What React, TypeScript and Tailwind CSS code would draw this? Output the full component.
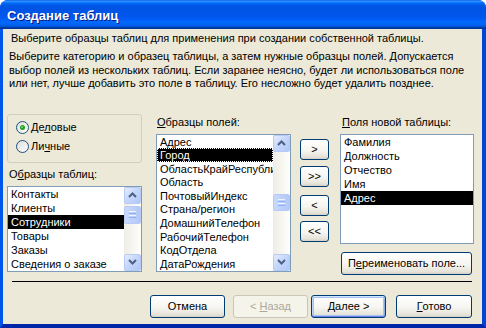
import React from "react";

function Arrow({ down }: { down?: boolean }) {
  return (
    <div className="h-[17px] w-full shrink-0 rounded-[2px] border border-[#B7CAF5] bg-[linear-gradient(135deg,#E6EEFD,#C6D7FC_45%,#B1C8F7)] flex items-center justify-center">
      <svg width="9" height="6" viewBox="0 0 9 6">
        <path d={down ? "M1 1 L4.5 4.5 L8 1" : "M1 5 L4.5 1.5 L8 5"} stroke="#4D6185" strokeWidth="2" fill="none" />
      </svg>
    </div>
  );
}

function Thumb({ cls }: { cls: string }) {
  return (
    <div className={"w-full rounded-[2px] border border-[#B7CAF5] bg-[linear-gradient(90deg,#C9D9FC,#BDD0FA_50%,#B3C8F7)] flex flex-col items-center justify-center gap-[1px] " + cls}>
      <div className="h-[1px] w-[7px] bg-[#EEF4FE]" />
      <div className="h-[1px] w-[7px] bg-[#8CB0F8]" />
      <div className="h-[1px] w-[7px] bg-[#EEF4FE]" />
      <div className="h-[1px] w-[7px] bg-[#8CB0F8]" />
    </div>
  );
}

function ScrollBar({ thumb }: { thumb: string }) {
  return (
    <div className="w-[17px] h-full flex flex-col bg-[linear-gradient(90deg,#EEEDE5,#FEFEFB)] shrink-0">
      <Arrow />
      <div className="flex-1 flex flex-col">
        <Thumb cls={thumb} />
      </div>
      <Arrow down />
    </div>
  );
}

function Item({ text, sel, focus }: { text: string; sel?: boolean; focus?: boolean }) {
  return (
    <div
      className={
        "h-[14px] leading-[14px] px-[3px] whitespace-nowrap overflow-hidden " +
        (sel ? "bg-black text-white " : "text-black ") +
        (focus ? "outline-1 outline-dotted outline-white -outline-offset-1" : "")
      }
    >
      {text}
    </div>
  );
}

function Btn({ children, cls, disabled, def }: { children: React.ReactNode; cls: string; disabled?: boolean; def?: boolean }) {
  return (
    <div
      className={
        "rounded-[3px] border flex items-center justify-center text-[11px] whitespace-pre " +
        (disabled
          ? "border-[#C9C7BA] bg-[#F5F4EA] text-[#ACA899] "
          : "border-[#003C74] bg-[linear-gradient(180deg,#FFFFFF_0%,#F6F5F0_55%,#E6E3D9_88%,#D6D0C5_100%)] text-black ") +
        (def ? "shadow-[inset_0_1px_0_#CEE7FF,inset_0_-1px_0_#6982EE,inset_1px_0_0_#BCD4F6,inset_-1px_0_0_#89ADE4,inset_0_0_0_2px_#A6C3F3] " : "") +
        cls
      }
    >
      {children}
    </div>
  );
}

function Radio({ checked }: { checked?: boolean }) {
  return (
    <svg width="13" height="13" viewBox="0 0 13 13" className="shrink-0">
      <defs>
        <linearGradient id={checked ? "rg1" : "rg2"} x1="0" y1="0" x2="1" y2="1">
          <stop offset="0" stopColor="#DCDCD7" />
          <stop offset="1" stopColor="#FFFFFF" />
        </linearGradient>
      </defs>
      <circle cx="6.5" cy="6.5" r="6" fill={`url(#${checked ? "rg1" : "rg2"})`} stroke="#1C5180" strokeWidth="1" />
      {checked && <circle cx="6.5" cy="6.5" r="2.5" fill="#21A121" />}
      {checked && <circle cx="6" cy="6" r="1" fill="#6CDB6C" />}
    </svg>
  );
}

export default function App() {
  return (
    <div className="w-[486px] h-[328px] bg-white font-['Liberation_Sans',Arial,sans-serif] text-[11px] text-black select-none">
      <div className="w-[486px] h-[328px] flex flex-col rounded-t-[8px] overflow-hidden bg-[#0A4BDD]">
        <div className="h-[29px] shrink-0 flex items-center pl-[7px] pt-[2px] bg-[linear-gradient(180deg,#0058EE_0%,#3593FF_4%,#288EFF_6%,#127DFF_8%,#036FFC_10%,#0262EE_14%,#0057E5_20%,#0054E3_24%,#0055EB_56%,#005BF5_66%,#026AFE_76%,#0062EF_86%,#0052D6_92%,#0040AB_94%,#003092_100%)]">
          <span className="text-white font-bold text-[13px] [text-shadow:1px_1px_#0A1883]">Создание таблиц</span>
        </div>
        <div className="flex-1 flex border-l-[3px] border-r-[4px] border-b-[4px] border-l-[#0055EA] border-r-[#0046D5] border-b-[#0027A8]">
          <div className="flex-1 bg-[#ECE9D8] flex flex-col">
            <p className="ml-[8px] mt-[3px] leading-[13px]">Выберите образцы таблиц для применения при создании собственной таблицы.</p>
            <p className="ml-[6px] mt-[5px] leading-[13.5px] w-[460px]">
              Выберите категорию и образец таблицы, а затем нужные образцы полей. Допускается выбор полей из нескольких таблиц. Если заранее неясно, будет ли использоваться поле или нет, лучше добавить это поле в таблицу. Его несложно будет удалить позднее.
            </p>
            <div className="flex items-start mt-[23px] ml-[4px]">
              {/* column 1 */}
              <div className="w-[135px] flex flex-col">
                <div className="h-[49px] rounded-[3px] border border-[#D0D0BF] flex flex-col pl-[8px] pt-[6px] gap-[5px]">
                  <div className="h-[14px] flex items-center gap-[2px]">
                    <Radio checked />
                    <span>Де<u>л</u>овые</span>
                  </div>
                  <div className="h-[14px] flex items-center gap-[2px]">
                    <Radio />
                    <span>Ли<u>ч</u>ные</span>
                  </div>
                </div>
                <div className="mt-[5px] ml-[2px] leading-[13px]">О<u>б</u>разцы таблиц:</div>
                <div className="mt-[5px] h-[86px] border border-[#7F9DB9] bg-white flex">
                  <div className="flex-1 flex flex-col overflow-hidden">
                    <Item text="Контакты" />
                    <Item text="Клиенты" />
                    <Item text="Сотрудники" sel />
                    <Item text="Товары" />
                    <Item text="Заказы" />
                    <Item text="Сведения о заказе" />
                  </div>
                  <ScrollBar thumb="mt-[2px] h-[18px]" />
                </div>
              </div>
              {/* column 2 */}
              <div className="ml-[14px] w-[135px] flex flex-col">
                <div className="mt-[2px] ml-[1px] leading-[13px]"><u>О</u>бразцы полей:</div>
                <div className="mt-[5px] h-[138px] border border-[#7F9DB9] bg-white flex">
                  <div className="flex-1 flex flex-col overflow-hidden">
                    <Item text="Адрес" />
                    <Item text="Город" sel focus />
                    <Item text="ОбластьКрайРеспублика" />
                    <Item text="Область" />
                    <Item text="ПочтовыйИндекс" />
                    <Item text="Страна/регион" />
                    <Item text="ДомашнийТелефон" />
                    <Item text="РабочийТелефон" />
                    <Item text="КодОтдела" />
                    <Item text="ДатаРождения" />
                  </div>
                  <ScrollBar thumb="mt-[42px] h-[17px]" />
                </div>
              </div>
              {/* arrows */}
              <div className="ml-[9px] mt-[25px] w-[29px] flex flex-col">
                <Btn cls="h-[21px]">&gt;</Btn>
                <Btn cls="h-[21px] mt-[6px]">&gt;&gt;</Btn>
                <Btn cls="h-[21px] mt-[8px]">&lt;</Btn>
                <Btn cls="h-[21px] mt-[5px]">&lt;&lt;</Btn>
              </div>
              {/* column 3 */}
              <div className="ml-[11px] w-[134px] flex flex-col">
                <div className="mt-[2px] ml-[2px] leading-[13px]"><u>П</u>оля новой таблицы:</div>
                <div className="mt-[5px] h-[110px] border border-[#7F9DB9] bg-white flex flex-col overflow-hidden">
                  <Item text="Фамилия" />
                  <Item text="Должность" />
                  <Item text="Отчество" />
                  <Item text="Имя" />
                  <Item text="Адрес" sel />
                </div>
                <Btn cls="mt-[8px] ml-[1px] w-[131px] h-[23px]">П<u>е</u>реименовать поле...</Btn>
              </div>
            </div>
            <div className="mt-[6px] ml-[9px] mr-[10px] h-[1px] bg-black" />
            <div className="mt-[13px] flex justify-end pr-[10px]">
              <Btn cls="w-[75px] h-[23px]">Отмена</Btn>
              <Btn cls="w-[75px] h-[23px] ml-[8px]" disabled>{"< "}<u>Н</u>азад</Btn>
              <Btn cls="w-[75px] h-[23px] ml-[3px]" def><u>Д</u>алее{" >"}</Btn>
              <Btn cls="w-[76px] h-[23px] ml-[10px]"><u>Г</u>отово</Btn>
            </div>
          </div>
        </div>
      </div>
    </div>
  );
}
